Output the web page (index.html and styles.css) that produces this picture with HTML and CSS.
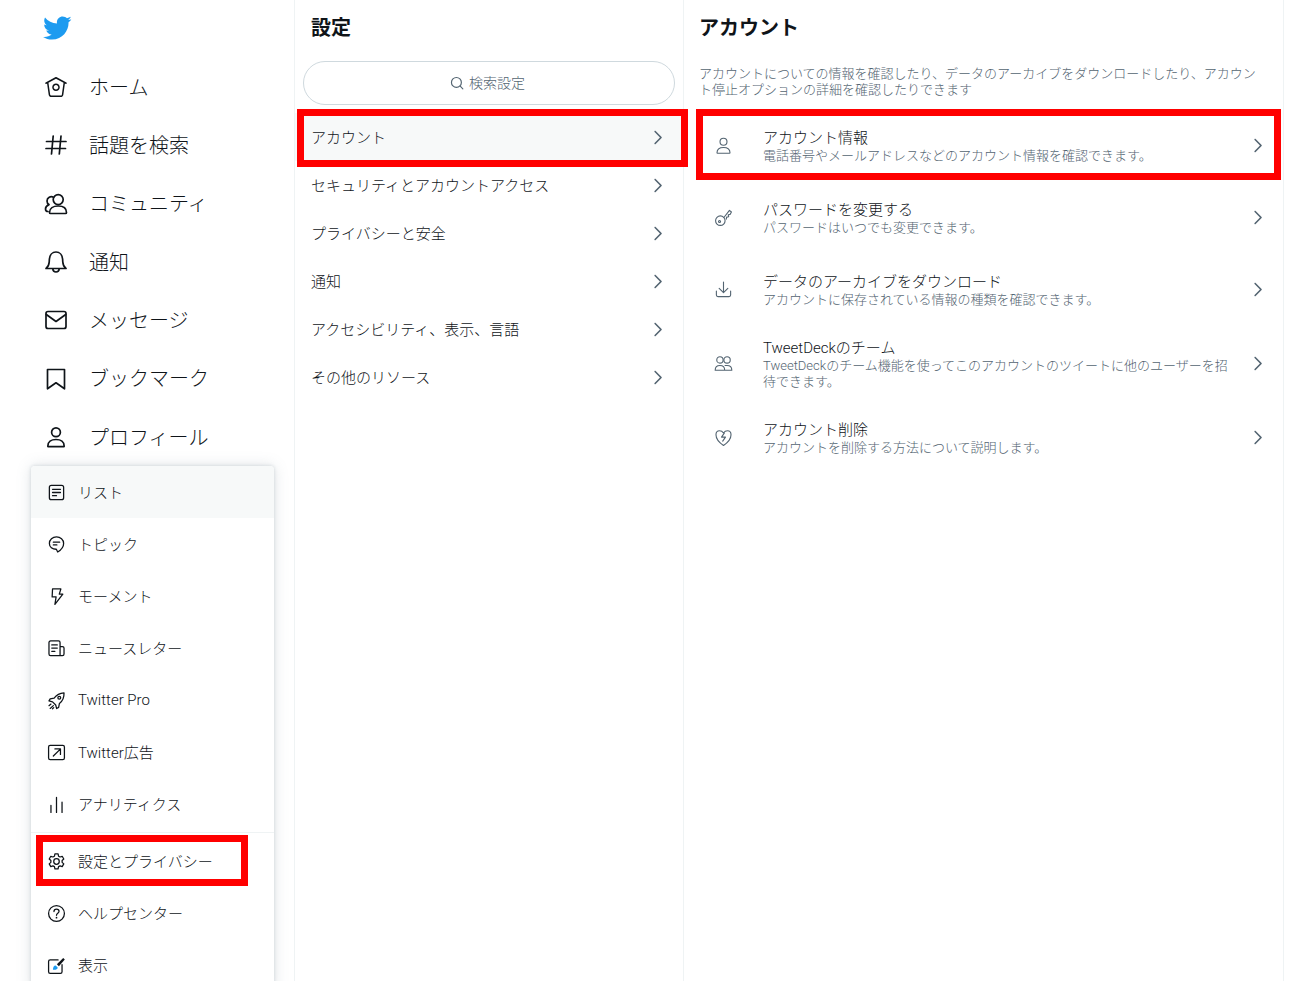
FILE: index.html
```html
<!DOCTYPE html>
<html lang="ja">
<head>
    <meta charset="UTF-8">
    <title>設定 / Twitter</title>
    <link rel="stylesheet" href="styles.css">
</head>
<body>
    <svg class="defs" aria-hidden="true">
        <symbol id="chev" viewBox="0 0 24 24"><path d="M17.207 11.293l-7.5-7.5c-.39-.39-1.023-.39-1.414 0s-.39 1.023 0 1.414L15.086 12l-6.793 6.793c-.39.39-.39 1.023 0 1.414.195.195.45.293.707.293s.512-.098.707-.293l7.5-7.5c.39-.39.39-1.023 0-1.414z"/></symbol>
        <symbol id="person" viewBox="0 0 24 24"><circle cx="12" cy="7.2" r="4.4"/><path d="M3.8 21.200c0-4.300 3.400-6.700 8.200-6.700s8.200 2.400 8.200 6.700c0 .3-.2.5-.5.5H4.300c-.3 0-.5-.2-.5-.5z"/></symbol>
    </svg>

    <nav class="side">
        <div class="logo">
            <svg viewBox="0 0 24 24"><path d="M23.643 4.937c-.835.37-1.732.62-2.675.733.962-.576 1.7-1.49 2.048-2.578-.9.534-1.95.922-3.056 1.14-.85-.904-2.06-1.47-3.4-1.47-2.572 0-4.658 2.086-4.658 4.66 0 .364.042.718.12 1.06-3.873-.195-7.304-2.05-9.602-4.868-.4.69-.63 1.49-.63 2.342 0 1.616.823 3.043 2.072 3.878-.764-.025-1.482-.234-2.11-.583v.06c0 2.257 1.605 4.14 3.737 4.568-.392.106-.803.162-1.227.162-.3 0-.593-.028-.877-.082.593 1.85 2.313 3.198 4.352 3.234-1.595 1.25-3.604 1.995-5.786 1.995-.376 0-.747-.022-1.112-.065 2.062 1.323 4.51 2.093 7.14 2.093 8.57 0 13.255-7.098 13.255-13.254 0-.2-.005-.402-.014-.602.91-.658 1.7-1.477 2.323-2.41z"/></svg>
        </div>
        <a class="nav-item">
            <svg class="nav-icon" viewBox="0 0 24 24"><path class="solid" d="M22.46 7.57L12.357 2.115c-.223-.12-.49-.12-.713 0L1.543 7.57c-.364.197-.5.652-.303 1.017.135.25.394.393.66.393.12 0 .243-.03.356-.09l.815-.44L4.7 19.963c.214 1.215 1.308 2.062 2.658 2.062h9.282c1.352 0 2.445-.848 2.663-2.087l1.626-11.49.818.442c.364.193.82.06 1.017-.304.196-.363.06-.818-.304-1.016zm-4.638 12.133c-.107.606-.703.822-1.18.822H7.36c-.48 0-1.075-.216-1.178-.798L4.48 7.69 12 3.628l7.522 4.06-1.7 12.015z"/><path class="solid" d="M8.22 12.184c0 2.084 1.695 3.78 3.78 3.78s3.78-1.696 3.78-3.78-1.695-3.78-3.78-3.78-3.78 1.696-3.78 3.78zm6.06 0c0 1.258-1.022 2.28-2.28 2.28s-2.28-1.022-2.28-2.28 1.022-2.28 2.28-2.28 2.28 1.022 2.28 2.28z"/></svg>
            <span>ホーム</span>
        </a>
        <a class="nav-item">
            <svg class="nav-icon" viewBox="0 0 24 24"><path d="M9.200 3l-1.700 18M17 3l-1.700 18M2.500 8.500h19.500M2 15.500h19.500"/></svg>
            <span>話題を検索</span>
        </a>
        <a class="nav-item">
            <svg class="nav-icon" viewBox="0 0 24 24"><circle cx="14.200" cy="7.600" r="5"/><path d="M9.600 5.400A4.300 4.300 0 0 0 3 9c0 1.600.8 2.900 2 3.600-1.900.8-3.500 2.400-3.500 4.400 0 1.500 1 2.500 2.500 2.500"/><path d="M5.500 20.500c0-4.200 3.700-6.500 8.700-6.500s8.300 2.300 8.300 6.500c0 .6-.4 1-1 1h-15c-.6 0-1-.4-1-1z"/></svg>
            <span>コミュニティ</span>
        </a>
        <a class="nav-item">
            <svg class="nav-icon" viewBox="0 0 24 24"><path d="M2 18.500c2-1.400 3-3.200 3.200-6.500l.2-3C5.700 5 8.400 2 12 2s6.300 3 6.600 7l.2 3c.2 3.300 1.200 5.100 3.200 6.500z"/><path d="M8.800 18.800c.1 2 1.500 3.200 3.200 3.200s3.100-1.200 3.200-3.200"/></svg>
            <span>通知</span>
        </a>
        <a class="nav-item">
            <svg class="nav-icon" viewBox="0 0 24 24"><rect x="2" y="3.500" width="20" height="17" rx="2"/><path d="M2.300 6.500L12 13.500l9.700-7"/></svg>
            <span>メッセージ</span>
        </a>
        <a class="nav-item">
            <svg class="nav-icon" viewBox="0 0 24 24"><path d="M3.500 2.500h17v19.300L12 15.800l-8.500 6z"/></svg>
            <span>ブックマーク</span>
        </a>
        <a class="nav-item">
            <svg class="nav-icon" viewBox="0 0 24 24"><use href="#person"/></svg>
            <span>プロフィール</span>
        </a>

        <div class="menu">
            <a class="menu-item hover">
                <svg class="menu-icon" viewBox="0 0 24 24"><rect x="3" y="3" width="18" height="18" rx="2.500"/><path d="M7 8h10M7 12h10M7 16h5"/></svg>
                <span>リスト</span>
            </a>
            <a class="menu-item">
                <svg class="menu-icon" viewBox="0 0 24 24"><path d="M12 2.500c-5 0-9 3.500-9 8.200 0 4.500 3.800 7.400 8.800 7.300l1.700 3.500c3.800-2.400 7.500-6.300 7.500-10.800 0-4.700-4-8.200-9-8.200z"/><path d="M8 9h8M8 12.500h4.500"/></svg>
                <span>トピック</span>
            </a>
            <a class="menu-item">
                <svg class="menu-icon" viewBox="0 0 24 24"><path d="M7 2.500h10.500l-2 6.500h4.500L10 22l1.500-9.500H6.500z"/></svg>
                <span>モーメント</span>
            </a>
            <a class="menu-item">
                <svg class="menu-icon" viewBox="0 0 24 24"><path d="M16.500 21H4.500A2 2 0 0 1 2.500 19V4.500a2 2 0 0 1 2-2h10a2 2 0 0 1 2 2V21zm0-11.500h3a2 2 0 0 1 2 2V19a2 2 0 0 1-2 2h-3"/><path d="M6 7.500h7M6 11.500h7M6 15.500h4"/></svg>
                <span>ニュースレター</span>
            </a>
            <a class="menu-item">
                <svg class="menu-icon" viewBox="0 0 24 24"><path d="M21.500 2.500c-5.500.3-9.500 2.500-12.500 6.500l-5 1-1.500 2.500 4.500 1.200 4 4 1.200 4.500 2.500-1.500 1-5c4-3 6-7 5.800-13.200z"/><circle cx="15.500" cy="8.500" r="1.800"/><path d="M2.500 18.500l2.500-2M4 22l4-3.500M7 22.500l1.500-1.500"/></svg>
                <span class="latin">Twitter Pro</span>
            </a>
            <a class="menu-item">
                <svg class="menu-icon" viewBox="0 0 24 24"><rect x="2" y="3" width="20" height="18" rx="2"/><path d="M8 16.500L16.500 8M10 7.500h7v7"/></svg>
                <span>Twitter広告</span>
            </a>
            <a class="menu-item">
                <svg class="menu-icon" viewBox="0 0 24 24"><path d="M5 22v-9M12 22V3M19 22v-13"/></svg>
                <span>アナリティクス</span>
            </a>
            <div class="menu-line"></div>
            <a class="menu-item">
                <svg class="menu-icon" viewBox="0 0 24 24"><circle cx="12" cy="12" r="3.500"/><path d="M10 2.500h4l.6 2.800 1.900 1 2.700-.9 2 3.400-2.100 1.900v2.400l2.100 1.900-2 3.400-2.700-.9-1.900 1-.6 2.800h-4l-.6-2.800-1.900-1-2.700.9-2-3.400 2.100-1.900v-2.400L2.800 8.800l2-3.400 2.700.9 1.900-1z"/></svg>
                <span>設定とプライバシー</span>
                <i class="mark mark-menu"></i>
            </a>
            <a class="menu-item">
                <svg class="menu-icon" viewBox="0 0 24 24"><circle cx="12" cy="12" r="10"/><path d="M8.800 9.500c0-1.900 1.400-3 3.200-3s3.200 1.100 3.200 2.800c0 2.400-3.200 2.500-3.200 5"/><circle class="solid" cx="12" cy="17.300" r="1.100"/></svg>
                <span>ヘルプセンター</span>
            </a>
            <a class="menu-item">
                <svg class="menu-icon" viewBox="0 0 24 24"><path d="M14 5H4a2 2 0 0 0-2 2v13a2 2 0 0 0 2 2h13a2 2 0 0 0 2-2v-9"/><path class="blue" d="M7.500 17.500c0-3 1-5.500 3.500-5.500l2.500 2.500c0 2.500-3 3-6 3z"/><path class="solid" d="M12.500 10.500L20.500 2.500l2 2-7.500 8.500z"/></svg>
                <span>表示</span>
            </a>
        </div>
    </nav>

    <section class="settings">
        <h2 class="head">設定</h2>
        <div class="search-wrap">
            <div class="search">
                <svg class="search-icon" viewBox="0 0 24 24"><circle cx="11" cy="11" r="8.500"/><path d="M17.500 17.500l4.500 4.500"/></svg>
                <span>検索設定</span>
            </div>
        </div>
        <a class="set-row active">
            <span>アカウント</span>
            <svg class="chev"><use href="#chev"/></svg>
            <i class="mark mark-set"></i>
        </a>
        <a class="set-row"><span>セキュリティとアカウントアクセス</span><svg class="chev"><use href="#chev"/></svg></a>
        <a class="set-row"><span>プライバシーと安全</span><svg class="chev"><use href="#chev"/></svg></a>
        <a class="set-row"><span>通知</span><svg class="chev"><use href="#chev"/></svg></a>
        <a class="set-row"><span>アクセシビリティ、表示、言語</span><svg class="chev"><use href="#chev"/></svg></a>
        <a class="set-row"><span>その他のリソース</span><svg class="chev"><use href="#chev"/></svg></a>
    </section>

    <section class="detail">
        <h2 class="head">アカウント</h2>
        <p class="intro">アカウントについての情報を確認したり、データのアーカイブをダウンロードしたり、アカウント停止オプションの詳細を確認したりできます</p>

        <a class="acc-row">
            <div class="acc-icon"><svg viewBox="0 0 24 24"><use href="#person"/></svg></div>
            <div class="acc-text">
                <div class="acc-title">アカウント情報</div>
                <div class="acc-sub">電話番号やメールアドレスなどのアカウント情報を確認できます。</div>
            </div>
            <svg class="chev"><use href="#chev"/></svg>
            <i class="mark mark-acc"></i>
        </a>
        <a class="acc-row">
            <div class="acc-icon"><svg viewBox="0 0 24 24"><circle cx="8" cy="16" r="6"/><circle cx="7" cy="17" r="1.300"/><path d="M12.500 12L19.500 3l2.500 2-1.500 3-2.500.5.500 2.500-2.500.5-.5 2.500"/></svg></div>
            <div class="acc-text">
                <div class="acc-title">パスワードを変更する</div>
                <div class="acc-sub">パスワードはいつでも変更できます。</div>
            </div>
            <svg class="chev"><use href="#chev"/></svg>
        </a>
        <a class="acc-row">
            <div class="acc-icon"><svg viewBox="0 0 24 24"><path d="M3 14v5a2 2 0 0 0 2 2h14a2 2 0 0 0 2-2v-5M12 2.500v13M6.500 10.500l5.500 5.500 5.500-5.500"/></svg></div>
            <div class="acc-text">
                <div class="acc-title">データのアーカイブをダウンロード</div>
                <div class="acc-sub">アカウントに保存されている情報の種類を確認できます。</div>
            </div>
            <svg class="chev"><use href="#chev"/></svg>
        </a>
        <a class="acc-row">
            <div class="acc-icon"><svg viewBox="0 0 24 24"><circle cx="7.500" cy="7.500" r="4"/><circle cx="16.500" cy="7.500" r="4"/><path d="M1.500 20.500c0-4 2.500-6 6-6s6 2 6 6zM14 14.600c.8-.1 1.700-.1 2.500-.1 3.500 0 6 2 6 6h-9"/></svg></div>
            <div class="acc-text">
                <div class="acc-title">TweetDeckのチーム</div>
                <div class="acc-sub">TweetDeckのチーム機能を使ってこのアカウントのツイートに他のユーザーを招待できます。</div>
            </div>
            <svg class="chev"><use href="#chev"/></svg>
        </a>
        <a class="acc-row">
            <div class="acc-icon"><svg viewBox="0 0 24 24"><path d="M12 22C6 18 2.500 13.500 2.500 8.500 2.500 5.500 4.500 3.500 7 3.500c2 0 3.800 1 5 2.800 1.200-1.800 3-2.800 5-2.800 2.500 0 4.500 2 4.500 5 0 5-3.500 9.500-9.500 13.500z"/><path d="M13 6.500L9.500 11.500h5L11 16.500"/></svg></div>
            <div class="acc-text">
                <div class="acc-title">アカウント削除</div>
                <div class="acc-sub">アカウントを削除する方法について説明します。</div>
            </div>
            <svg class="chev"><use href="#chev"/></svg>
        </a>
    </section>
</body>
</html>
```

FILE: styles.css
```css
html, body {
    height: 100%;
}
body {
    margin: 0;
    display: flex;
    overflow: hidden;
    background: #ffffff;
    color: #0f1419;
    font-family: Roboto, "Noto Sans CJK JP", sans-serif;
    font-weight: 300;
}
.defs {
    display: none;
}
svg {
    fill: none;
    stroke: currentColor;
    stroke-width: 1.7;
    stroke-linejoin: round;
    stroke-linecap: round;
    flex: none;
}
svg .solid {
    fill: currentColor;
    stroke: none;
}
svg .blue {
    fill: #1d9bf0;
    stroke: none;
}

/* left column */
.side {
    width: 294px;
    flex: none;
}
.logo {
    height: 58px;
    padding-left: 42px;
    padding-bottom: 3px;
    display: flex;
    align-items: center;
    box-sizing: border-box;
}
.logo svg {
    width: 30px;
    height: 30px;
    fill: #1d9bf0;
    stroke: none;
}
.nav-item {
    height: 58.33px;
    display: flex;
    align-items: center;
    padding-left: 44px;
    font-size: 20px;
}
.nav-item span,
.menu-item span,
.set-row span,
.search span {
    margin-top: -2px;
}
.menu-item span.latin {
    margin-top: 0;
}
.nav-icon {
    width: 24px;
    height: 24px;
    margin-right: 21px;
}
.menu {
    width: 243px;
    margin-left: 31px;
    border-radius: 4px 4px 0 0;
    background: #ffffff;
    box-shadow: 0 0 15px rgba(101, 119, 134, 0.2), 0 0 3px 1px rgba(101, 119, 134, 0.15);
}
.menu-item {
    position: relative;
    height: 52px;
    display: flex;
    align-items: center;
    padding-left: 16px;
    font-size: 15px;
}
.menu-item.hover {
    background: #f7f9f9;
    border-radius: 4px 4px 0 0;
}
.menu-icon {
    width: 19px;
    height: 19px;
    margin-right: 12px;
    stroke-width: 1.6;
}
.menu-line {
    height: 1px;
    margin: 2px 0;
    background: #eff3f4;
}

/* red annotation boxes */
.mark {
    position: absolute;
    border: 7px solid #ff0000;
    box-sizing: border-box;
}
.mark-menu {
    left: 5px;
    top: 0;
    width: 212px;
    height: 51px;
}
.mark-set {
    left: 2px;
    right: -5px;
    top: -4px;
    bottom: -6px;
}
.mark-acc {
    left: 12px;
    right: 2px;
    top: 0;
    bottom: 1px;
}

/* settings column */
.settings {
    width: 390px;
    flex: none;
    box-sizing: border-box;
    border-left: 1px solid #eff3f4;
    border-right: 1px solid #eff3f4;
}
.head {
    height: 53px;
    margin: 0;
    padding-left: 16px;
    display: flex;
    align-items: center;
    font-size: 20px;
    font-weight: 700;
}
.detail .head {
    padding-left: 15px;
}
.search-wrap {
    padding: 8px;
}
.search {
    height: 42px;
    padding-right: 3px;
    border: 1px solid #cfd9de;
    border-radius: 22px;
    display: flex;
    align-items: center;
    justify-content: center;
    color: #536471;
    font-size: 14px;
}
.search-icon {
    width: 14px;
    height: 14px;
    margin-right: 5px;
    stroke-width: 2;
}
.set-row {
    position: relative;
    height: 48px;
    padding: 0 16px;
    display: flex;
    align-items: center;
    justify-content: space-between;
    font-size: 15px;
}
.set-row.active {
    background: #f7f9f9;
}
.chev {
    width: 19px;
    height: 19px;
    fill: #536471;
    stroke: none;
}

/* account column */
.detail {
    width: 600px;
    flex: none;
    box-sizing: border-box;
    border-right: 1px solid #eff3f4;
}
.intro {
    margin: 0;
    padding: 13px 16px 11px 15px;
    color: #536471;
    font-size: 13px;
    line-height: 16px;
}
.acc-row {
    position: relative;
    min-height: 72px;
    padding: 12px 16px 12px 15px;
    box-sizing: border-box;
    display: flex;
    align-items: center;
}
.acc-icon {
    width: 48px;
    margin-right: 16px;
    flex: none;
    display: flex;
    justify-content: center;
    color: #536471;
}
.acc-icon svg {
    width: 19px;
    height: 19px;
    stroke-width: 1.4;
}
.acc-text {
    flex: 1;
    margin: 1px 12px -1px 0;
}
.acc-title {
    font-size: 15px;
    line-height: 20px;
}
.acc-sub {
    color: #536471;
    font-size: 13px;
    line-height: 16px;
}
```
